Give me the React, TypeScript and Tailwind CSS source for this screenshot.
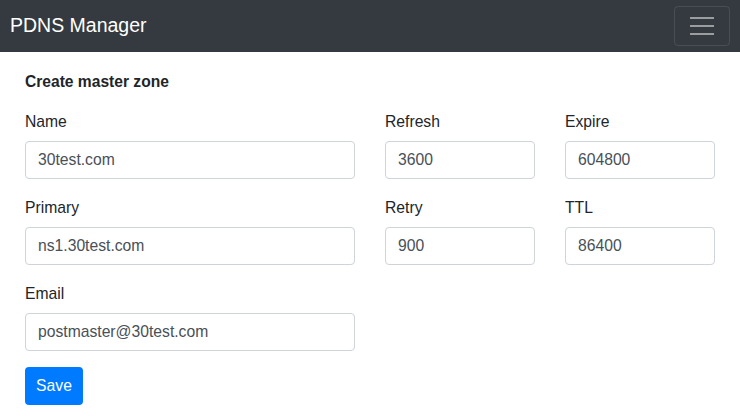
import React from "react";

const fields = [
  { label: "Name", value: "30test.com" },
  { label: "Refresh", value: "3600" },
  { label: "Expire", value: "604800" },
  { label: "Primary", value: "ns1.30test.com" },
  { label: "Retry", value: "900" },
  { label: "TTL", value: "86400" },
  { label: "Email", value: "postmaster@30test.com" },
];

function Field({ label, value }: { label: string; value: string }) {
  return (
    <div className="flex flex-col">
      <label className="text-[15.7px] leading-[24px] text-[#212529] mb-[7px]">{label}</label>
      <input
        readOnly
        value={value}
        className="h-[38px] w-full border border-[#ced4da] rounded-[4px] px-3 text-[15.7px] text-[#495057] bg-white outline-none"
      />
    </div>
  );
}

export default function App() {
  return (
    <div className="w-[740px] h-[416px] bg-white overflow-hidden" style={{ fontFamily: '"Liberation Sans", Arial, sans-serif' }}>
      {/* Navbar */}
      <nav className="h-[52px] bg-[#343a40] px-[10px] flex items-center justify-between">
        <span className="text-white text-[19.5px] leading-none">PDNS Manager</span>
        <button className="w-[56px] h-[40px] -mt-[1px] border border-white/10 rounded-[4px] flex flex-col items-center justify-center gap-[6px]">
          <span className="block w-[24px] h-[2px] bg-[#9a9da0]" />
          <span className="block w-[24px] h-[2px] bg-[#9a9da0]" />
          <span className="block w-[24px] h-[2px] bg-[#9a9da0]" />
        </button>
      </nav>

      {/* Form */}
      <div className="pl-[25px] pt-[18px]">
        <h2 className="text-[15.6px] leading-[24px] font-bold text-[#212529] mb-4">Create master zone</h2>
        <div className="grid grid-cols-[330px_150px_150px] gap-x-[30px] gap-y-[17px]">
          {fields.map((f) => (
            <Field key={f.label} label={f.label} value={f.value} />
          ))}
        </div>
        <button className="mt-[16px] w-[58px] h-[38px] bg-[#007bff] text-white text-[15.7px] rounded-[4px]">Save</button>
      </div>
    </div>
  );
}
